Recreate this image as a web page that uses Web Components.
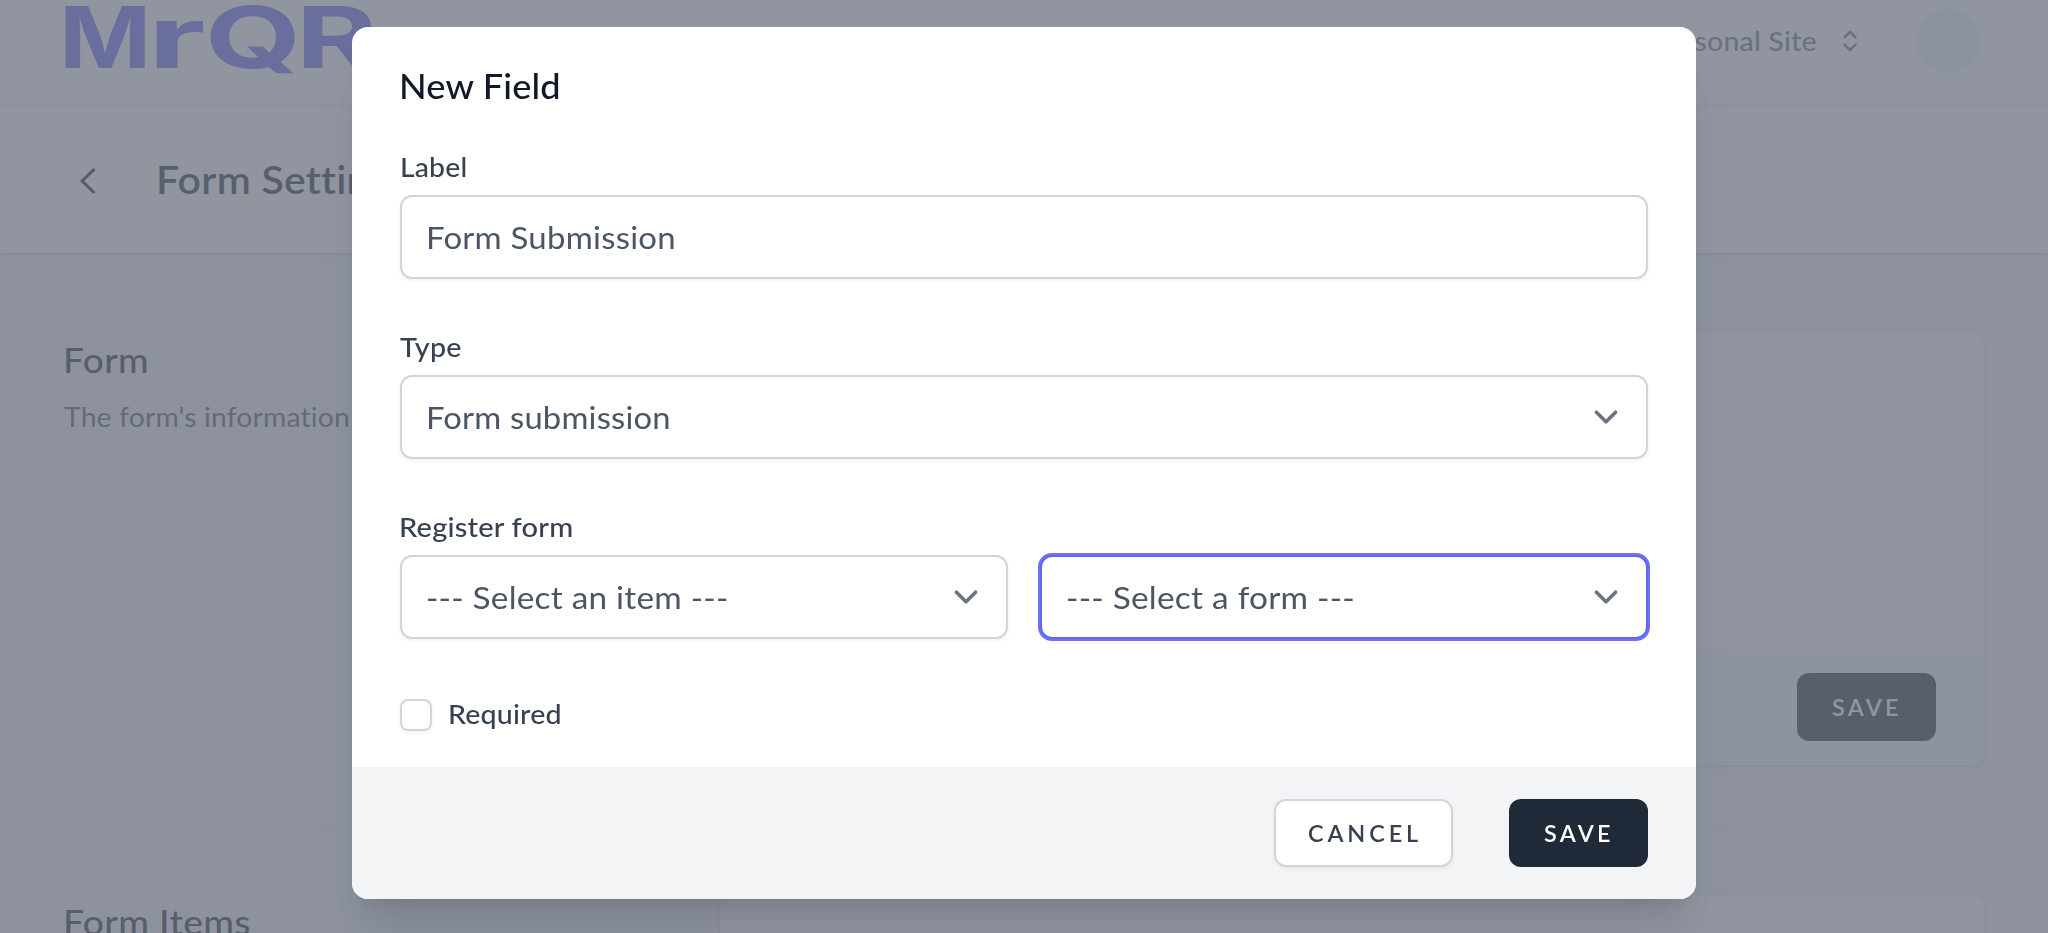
<!DOCTYPE html>
<html lang="en">
<head>
<meta charset="utf-8">
<title>MrQR - Form Settings</title>
<style>
html,body{margin:0;height:933px;overflow:hidden;background:#f3f4f6}
body{font-family:Lato,"Open Sans",sans-serif;color:#1f2937}
</style>
</head>
<body>
<mr-page></mr-page>
<mr-modal></mr-modal>
<script>
const define=(name,html,init)=>customElements.define(name,class extends HTMLElement{
  constructor(){super();this.attachShadow({mode:'open'}).innerHTML=html}
  connectedCallback(){if(init)init.call(this)}
});

/* Text run whose ink spans the given width: by wider glyphs, or by tracking when "tracked" is set. */
define('mr-text',`<style>:host{display:block;white-space:nowrap;font-kerning:normal}span{display:inline-block;transform-origin:0 50%}</style><span><slot></slot></span>`,function(){
  const t=this.textContent,cs=getComputedStyle(this),w=+this.getAttribute('ink');
  if(!w)return;
  const c=document.createElement('canvas').getContext('2d');
  c.font=`${cs.fontWeight} ${cs.fontSize} ${cs.fontFamily}`;
  const m=c.measureText(t),ink=m.actualBoundingBoxRight+m.actualBoundingBoxLeft;
  const k=this.hasAttribute('tracked')?1:1+(w/ink-1)*.8;
  const ls=(w/k-ink)/(t.length-1);
  const s=this.shadowRoot.querySelector('span');
  const natural=m.width+ls*(t.length-1);
  s.style.letterSpacing=ls.toFixed(3)+'px';
  s.style.transform=`scaleX(${k.toFixed(4)})`;
  s.style.marginRight=(natural*(k-1)-ls).toFixed(3)+'px';
  s.style.marginLeft=((+this.getAttribute('bearing')||0)+m.actualBoundingBoxLeft*k).toFixed(2)+'px';
});

define('mr-logo',`<style>
:host{display:block;width:312px;height:70px;color:#6366f1;font:700 85.3px/62px Inter,sans-serif}
div{display:flex;height:62px}
span{display:block;flex:none;transform-origin:0 50%;white-space:nowrap}
</style><div><span>M</span><span>r</span><span>Q</span><span>R</span></div>`,function(){
  const boxes=[[0,80],[91,48],[144.5,85.5],[238,72]],c=document.createElement('canvas').getContext('2d');
  c.font='700 85.3px Inter, sans-serif';
  let x=0;
  this.shadowRoot.querySelectorAll('span').forEach((s,i)=>{
    const m=c.measureText(s.textContent),k=boxes[i][1]/(m.actualBoundingBoxRight+m.actualBoundingBoxLeft);
    s.style.transform=`scaleX(${k})`;
    s.style.width=m.width+'px';
    s.style.marginLeft=(boxes[i][0]+m.actualBoundingBoxLeft*k-x)+'px';
    x=boxes[i][0]+m.actualBoundingBoxLeft*k+m.width;
  });
});

define('mr-button',`<style>
:host{display:flex;box-sizing:border-box;width:139px;height:68px;border-radius:12px;background:#1f2937;color:#fff;font-size:23.4px;font-weight:600;padding:0 0 1px 35px;align-items:center}
:host([secondary]){width:179px;background:#fff;color:#374151;border:2px solid #d1d5db;box-shadow:0 2px 4px rgba(0,0,0,.05);padding-left:33px}
</style><slot></slot>`);

define('mr-card',`<style>
:host{display:flex;flex-direction:column;box-sizing:border-box;width:1264px;height:432px;flex:none;background:#fff;border-radius:12px;overflow:hidden;box-shadow:0 2px 6px rgba(0,0,0,.1),0 2px 4px -2px rgba(0,0,0,.1)}
.body{flex:1}
footer{display:flex;justify-content:flex-end;background:#f4f8fa;padding:24px 48px}
</style><div class="body"></div><footer><slot></slot></footer>`);

define('mr-section',`<style>
:host{display:flex;justify-content:space-between;margin:0 64px}
.intro{padding-top:8px}
.title{font-size:35px;font-weight:500;line-height:36px;color:#1f2937;padding-bottom:20px}
.note{font-size:27.3px;line-height:40px;color:#4b5563}
</style><div class="intro"><div class="title"><slot name="title"></slot></div><div class="note"><slot name="note"></slot></div></div><slot></slot>`);

define('mr-page',`<style>
:host{display:block;height:933px;overflow:hidden;background:#f3f4f6}
nav{display:flex;box-sizing:border-box;height:107px;background:#fff;border-bottom:2px solid #f3f4f6;padding:6px 68px 0 65px}
.team{display:flex;align-items:center;margin-left:auto;height:70px;color:#6b7280;font-size:27.3px;font-weight:500}
.team mr-text{padding-bottom:2px}
.team svg{margin-left:21px}
.avatar{width:64px;height:64px;border-radius:50%;background:#ebf4ff;margin:3px 0 0 54px}
header{display:flex;align-items:center;height:146px;background:#fff;box-shadow:0 2px 6px rgba(0,0,0,.1),0 2px 4px -2px rgba(0,0,0,.1);padding-left:64px;color:#1f2937;font-size:39px;font-weight:600}
header svg{margin-right:46px}
header mr-text{padding-bottom:3px}
main{padding-top:80px}
hr{margin:64px 64px;border:0;height:2px;background:#ecedf1}
</style>
<nav><mr-logo></mr-logo>
<div class="team"><mr-text ink="162">Personal Site</mr-text>
<svg width="24" height="24" viewBox="0 0 24 24" fill="none" stroke="currentColor" stroke-width="2.6" stroke-linecap="round" stroke-linejoin="round"><path d="M6.5 8.3 12 2.8l5.5 5.5M6.5 15.7l5.5 5.5 5.5-5.5"/></svg></div>
<div class="avatar"></div></nav>
<header><svg width="48" height="48" viewBox="0 0 48 48" fill="none" stroke="#111827" stroke-width="3" stroke-linejoin="round"><path d="M30.500 13 18 25l12.500 12"/></svg><mr-text ink="248" bearing="1.500">Form Settings</mr-text></header>
<main>
<mr-section><mr-text slot="title" ink="80.500" bearing="2.500">Form</mr-text><mr-text slot="note" ink="285">The form's information</mr-text><mr-card><mr-button><mr-text tracked ink="66">SAVE</mr-text></mr-button></mr-card></mr-section>
<hr>
<mr-section><mr-text slot="title" ink="183" bearing="2.500">Form Items</mr-text><mr-card></mr-card></mr-section>
</main>`);

define('mr-label',`<style>:host{display:block;height:48px;line-height:39px;font-size:27.3px;font-weight:500;color:#374151}</style><slot></slot>`);

define('mr-input',`<style>
:host{display:flex;box-sizing:border-box;align-items:center;justify-content:space-between;flex:1;height:84px;border:2px solid #d1d5db;border-radius:12px;background:#fff;box-shadow:0 2px 4px rgba(0,0,0,.05);padding:0 16px 0 25px;font-size:31.2px;color:#4b5563}
:host([focused]){border-color:#6366f1;box-shadow:0 0 0 2px #6e70f2}
svg{display:none}
:host([select]) svg{display:block}
</style><slot></slot><svg width="48" height="48" viewBox="0 0 20 20" fill="none" stroke="#6b7280" stroke-width="1.5" stroke-linecap="round" stroke-linejoin="round"><path d="m6 8 4 4 4-4"/></svg>`);

define('mr-field',`<style>:host{display:block;margin-bottom:48px}.row{display:flex;gap:32px}</style><slot name="label"></slot><div class="row"><slot></slot></div>`);

define('mr-checkbox',`<style>:host{display:flex;align-items:center;height:32px;gap:17px;font-size:27.3px;line-height:30px;font-weight:500;color:#374151}
::slotted(mr-text){padding-bottom:2px}
i{box-sizing:border-box;width:32px;height:32px;border:2px solid #d1d5db;border-radius:8px;background:#fff;box-shadow:0 2px 4px rgba(0,0,0,.05)}</style><i></i><slot></slot>`);

define('mr-modal',`<style>
:host{position:fixed;inset:0;display:flex;justify-content:center;align-items:flex-start;padding-top:27px;background:rgba(107,114,128,.75)}
.dialog{display:flex;flex-direction:column;width:1344px;height:872px;border-radius:16px;overflow:hidden;background:#fff;box-shadow:0 40px 50px -10px rgba(0,0,0,.1),0 16px 20px -12px rgba(0,0,0,.1)}
.body{flex:1;padding:30px 48px 0}
h2{margin:0 0 34px;font-size:35px;line-height:56px;font-weight:500;color:#111827}
mr-checkbox{margin-top:60px}
footer{display:flex;justify-content:flex-end;gap:56px;box-sizing:border-box;height:132px;padding:32px 48px;background:#f3f4f6}
</style>
<div class="dialog"><div class="body">
<h2><mr-text ink="157.500" bearing="2">New Field</mr-text></h2>
<mr-field><mr-label slot="label"><mr-text ink="63.500" bearing="2">Label</mr-text></mr-label><mr-input><mr-text ink="246" bearing="1">Form Submission</mr-text></mr-input></mr-field>
<mr-field><mr-label slot="label"><mr-text ink="61">Type</mr-text></mr-label><mr-input select><mr-text ink="241" bearing="1">Form submission</mr-text></mr-input></mr-field>
<mr-field><mr-label slot="label"><mr-text ink="171" bearing="1.500">Register form</mr-text></mr-label><mr-input select><mr-text ink="299.500">--- Select an item ---</mr-text></mr-input><mr-input select focused><mr-text ink="286">--- Select a form ---</mr-text></mr-input></mr-field>
<mr-checkbox><mr-text ink="110" bearing="1">Required</mr-text></mr-checkbox>
</div><footer><mr-button secondary><mr-text tracked ink="109">CANCEL</mr-text></mr-button><mr-button><mr-text tracked ink="66">SAVE</mr-text></mr-button></footer></div>`);
</script>
</body>
</html>
